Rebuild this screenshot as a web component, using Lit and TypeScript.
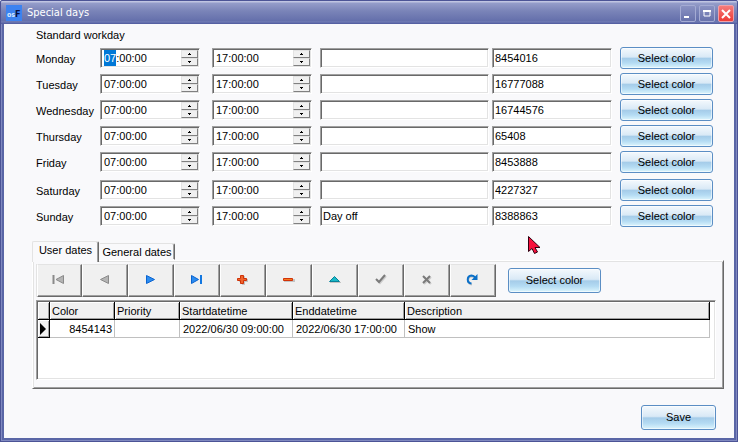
import { LitElement, html, css, svg } from "lit";
import { customElement, state } from "lit/decorators.js";
import { classMap } from "lit/directives/class-map.js";

interface Day { name: string; note: string; color: string; weekend?: boolean; }

const DAYS: Day[] = [
  { name: "Monday", note: "", color: "8454016" },
  { name: "Tuesday", note: "", color: "16777088" },
  { name: "Wednesday", note: "", color: "16744576" },
  { name: "Thursday", note: "", color: "65408" },
  { name: "Friday", note: "", color: "8453888" },
  { name: "Saturday", note: "", color: "4227327", weekend: true },
  { name: "Sunday", note: "Day off", color: "8388863" },
];

const TABS = ["User dates", "General dates"];

const NAV = [
  { label: "First", icon: svg`<path d="M3.5 4v9" stroke="#8a8a8a" stroke-width="2" fill="none"/><path d="M13.5 4.5v8L6 8.5z" fill="#b4b4b4" stroke="#8a8a8a"/>` },
  { label: "Previous", icon: svg`<path d="M12.5 4.5v8l-8-4z" fill="#b4b4b4" stroke="#8a8a8a"/>` },
  { label: "Next", icon: svg`<path d="M4.5 4.5v8l8-4z" fill="#2b8cf0" stroke="#0a63d0"/>` },
  { label: "Last", icon: svg`<path d="M3.5 4.5v8l7-4z" fill="#2b8cf0" stroke="#0a63d0"/><path d="M13 4v9" stroke="#1277e0" stroke-width="2" fill="none"/>` },
  { label: "Insert", icon: svg`<path d="M8 5h3v3h3v3h-3v3H8v-3H5V8h3z" fill="#c4c4c4"/><path d="M6.5 4.5h3v3h3v2h-3v3h-3v-3h-3v-2h3z" fill="#f0642c" stroke="#cf3208"/>` },
  { label: "Delete", icon: svg`<path d="M4 8h11v3H4z" fill="#c4c4c4"/><path d="M3.500 7.500h9v2h-9z" fill="#f47a20" stroke="#d23208"/>` },
  { label: "Edit", icon: svg`<path d="M4 11h11v1H4z" fill="#c4c4c4"/><path d="M3.5 10.5h10l-5-5z" fill="#19b8c6" stroke="#08829a"/>` },
  { label: "Post", icon: svg`<path d="M5 9l3 3 6-7" fill="none" stroke="#cccccc" stroke-width="2"/><path d="M4 8l3 3 6-7" fill="none" stroke="#7b7b7b" stroke-width="2"/>` },
  { label: "Cancel", icon: svg`<path d="M6 6l7 7M13 6l-7 7" stroke="#cccccc" stroke-width="2"/><path d="M5 5l7 7M12 5l-7 7" stroke="#7b7b7b" stroke-width="2"/>` },
  { label: "Refresh", icon: svg`<path d="M8 13.5C3 13 3 6 8 5.5c2 0 3 1 4 3" fill="none" stroke="#c8c8c8" stroke-width="2"/><path d="M7.5 12.5C2.5 12 2.5 5 7.5 4.5c2 0 3 1 4 2.5" fill="none" stroke="#0b70c8" stroke-width="2"/><path d="M13.5 3v6h-6z" fill="#0b70c8"/>` },
];

const ROWS = [
  { color: "8454143", priority: "", start: "2022/06/30 09:00:00", end: "2022/06/30 17:00:00", description: "Show" },
];

@customElement("time-field")
class TimeField extends LitElement {
  static properties = { value: {}, label: {}, active: { type: Boolean } };
  declare value: string;
  declare label: string;
  declare active: boolean;

  static styles = css`
    :host { display: block; height: 20px; min-width: 0; }
    .field {
      display: flex; height: 100%; box-sizing: border-box; padding: 1px;
      background: #fff; border: 1px solid; border-color: #a0a0a0 #fff #fff #a0a0a0;
      box-shadow: inset 1px 1px #696969, inset -1px -1px #e3e3e3;
    }
    input {
      flex: 1; min-width: 0; border: 0; outline: 0; padding: 0 0 0 2px;
      background: transparent; font: 11px/16px "Liberation Sans", sans-serif; color: #000;
    }
    input::selection { background: #0078d7; color: #fff; }
    .spin { width: 17px; display: flex; flex-direction: column; }
    button {
      flex: 1; min-height: 0; padding: 0; display: grid; place-items: center;
      background: #f0f0f0; border: 1px solid; border-color: #e3e3e3 #808080 #808080 #e3e3e3;
    }
    svg { width: 3px; height: 2px; display: block; }
  `;

  firstUpdated() {
    if (!this.active) return;
    const input = this.renderRoot.querySelector("input")!;
    input.focus();
    input.setSelectionRange(0, 2);
  }

  render() {
    return html`<div class="field">
      <input type="text" aria-label=${this.label} .value=${this.value} />
      <div class="spin">
        <button type="button" tabindex="-1" aria-label="Increase"><svg viewBox="0 0 3 2" shape-rendering="crispEdges"><path d="M1 0h1v1h1v1H0V1h1z" /></svg></button>
        <button type="button" tabindex="-1" aria-label="Decrease"><svg viewBox="0 0 3 2" shape-rendering="crispEdges"><path d="M0 0h3v1H2v1H1V1H0z" /></svg></button>
      </div>
    </div>`;
  }
}

@customElement("app-root")
class AppRoot extends LitElement {
  @state() private tab = 0;

  static styles = css`
    :host { display: block; font: 11px/14px "Liberation Sans", sans-serif; color: #000; }
    * { box-sizing: border-box; }
    button, input { font: inherit; color: inherit; }
    .window {
      min-height: 100vh; display: flex; flex-direction: column; padding: 0 4px 4px;
      background: #6672ae; border-radius: 3px 3px 0 0;
      box-shadow: inset 0 0 0 1px #4c5496, inset 0 0 0 2px #8089c0, inset 0 0 0 4px #5a66a6;
    }
    .title {
      height: 24px; margin: 0 -3px; padding: 2px 3px 0 5px; display: flex; align-items: center; gap: 5px;
      background: linear-gradient(#4c5496 0 1px, #c0c5e2 1px 2px, #959dca 3px, #7a84b8 11px, #646fab 21px, #7580b8 22px, #5560a2 23px);
      border-radius: 3px 3px 0 0;
    }
    .logo { width: 16px; height: 16px; display: block; }
    .logo text { font: bold 9px "DejaVu Sans Condensed", "Liberation Sans", sans-serif; }
    .logo .small { font-size: 7px; }
    h1 {
      flex: 1; margin: 0; color: #fff; font: 11px/16px "DejaVu Sans Condensed", "DejaVu Sans", sans-serif;
    }
    .controls { display: flex; gap: 3px; }
    .controls button {
      width: 16px; height: 17px; padding: 0; display: grid; place-items: center;
      border: 1px solid #a4abd3; border-radius: 2px; background: linear-gradient(#8a92c2, #6872ac);
    }
    .controls .close { background: linear-gradient(#f47c7c, #ee3b36); border-color: #f0a0a8; }
    .controls svg { width: 14px; height: 15px; display: block; }
    .body { flex: 1; display: flex; flex-direction: column; padding: 4px 10px 8px 28px; background: #f9f9fb; }
    h2 { margin: 0 0 5px 4px; font: inherit; }
    .days { display: flex; flex-direction: column; gap: 4px; padding: 0 11px 0 4px; }
    .day { display: grid; grid-template-columns: 56px 100px 100px minmax(0, 1fr) 120px 93px; align-items: center; column-gap: 8px; }
    .day.weekend { margin-top: 2px; }
    .name { padding-top: 2px; }
    .until { margin-left: 4px; margin-right: -4px; }
    .note { margin-left: 4px; margin-right: -5px; }
    .text {
      min-width: 0; height: 20px; padding: 0 2px 1px; background: #fff; outline: 0;
      border: 1px solid; border-color: #a0a0a0 #fff #fff #a0a0a0;
      box-shadow: inset 1px 1px #696969, inset -1px -1px #e3e3e3;
    }
    .push {
      height: 22px; padding: 0; border: 1px solid #5b8ec4; border-radius: 3px;
      background: linear-gradient(#f4f9fd 0, #d9e9f6 45%, #a5cce9 52%, #b4dbf3 75%, #dcf5fd 100%);
      box-shadow: inset 0 0 0 1px #ffffff90;
    }
    .push.tall { height: 25px; width: 93px; padding-bottom: 2px; }
    .push.save { width: 75px; align-self: flex-end; margin: 16px 8px 0 0; }
    .tabs { display: flex; align-items: flex-end; height: 19px; margin-top: 14px; }
    .tabs button {
      height: 17px; width: 76px; padding: 0; background: #f9f9fb; border: 1px solid;
      border-color: #e3e3e3 #696969 transparent transparent; border-radius: 2px 2px 0 0;
      box-shadow: inset -1px 0 #a0a0a0; white-space: nowrap; position: relative;
    }
    .tabs .active {
      height: 21px; width: 67px; margin-bottom: -2px; padding-bottom: 4px; z-index: 1;
      border-left-color: #e3e3e3; border-bottom: 0;
    }
    .panel {
      flex: 1; display: flex; flex-direction: column; gap: 3px; padding: 3px 7px 8px 3px;
      border: 1px solid; border-color: #fff #696969 #696969 #fff;
      box-shadow: inset 1px 1px #e3e3e3, inset -1px -1px #a0a0a0;
    }
    .bar { display: flex; align-items: center; gap: 12px; }
    .nav { display: flex; border-left: 1px solid #e3e3e3; }
    .nav button {
      width: 46px; height: 33px; padding: 0 2px 2px 0; display: grid; place-items: center; background: #f0f0f0;
      border: 1px solid; border-color: #e3e3e3 #696969 #696969 #fff; box-shadow: inset -1px -1px #a0a0a0;
    }
    .nav button:first-child { width: 45px; }
    .nav svg { width: 17px; height: 17px; display: block; }
    .grid {
      flex: 1; min-height: 80px; padding: 1px 5px 1px 1px; background: #fff;
      border: 1px solid; border-color: #a0a0a0 #fff #fff #a0a0a0;
      box-shadow: inset 1px 1px #696969, inset -1px -1px #e3e3e3;
    }
    table { width: 100%; table-layout: fixed; border-collapse: separate; border-spacing: 0; }
    th, td { height: 18px; padding: 0 2px; line-height: 16px; text-align: left; font-weight: normal; white-space: nowrap; overflow: hidden; }
    th { background: #f0f0f0; border-right: 1px solid #000; border-bottom: 1px solid #000; box-shadow: inset 1px 1px #fff, inset -1px -1px #a0a0a0; }
    td { border-right: 1px solid #c0c0c0; border-bottom: 1px solid #c0c0c0; padding: 0 3px; }
    td.number { text-align: right; padding: 0 2px; }
    td.mark { padding: 0 2px; background: #f0f0f0; border-color: #000; box-shadow: inset 1px 1px #fff, inset -1px -1px #a0a0a0; }
    td.mark svg { width: 6px; height: 12px; display: block; }
    .c-mark { width: 12px; }
    .c-short { width: 65px; }
    .c-date { width: 113px; }
    .c-end { width: 112px; }
    .cursor { position: absolute; left: 527px; top: 235px; width: 14px; height: 20px; pointer-events: none; z-index: 2; }
  `;

  render() {
    return html`
      <div class="window">
        <header class="title">
          <svg class="logo" viewBox="0 0 16 16" aria-hidden="true">
            <rect width="16" height="16" fill="#3c82f0" />
            <text x="1" y="12" fill="#d5e8ff"><tspan class="small">os</tspan><tspan fill="#08103c">F</tspan></text>
          </svg>
          <h1>Special days</h1>
          <div class="controls">
            <button type="button" aria-label="Minimize"><svg viewBox="0 0 14 15"><path d="M3 10h5v2H3z" fill="#fff" /></svg></button>
            <button type="button" aria-label="Maximize"><svg viewBox="0 0 14 15"><path d="M4 5h6v5H4z" fill="none" stroke="#fff" /><path d="M3 4h8v2H3z" fill="#fff" /></svg></button>
            <button type="button" class="close" aria-label="Close"><svg viewBox="0 0 14 15"><path d="M3 4l8 8M11 4l-8 8" stroke="#fff" stroke-width="2" /></svg></button>
          </div>
        </header>
        <main class="body">
          <h2>Standard workday</h2>
          <div class="days">
            ${DAYS.map((d, i) => html`
              <div class=${classMap({ day: true, weekend: !!d.weekend })}>
                <label class="name" for="note-${i}">${d.name}</label>
                <time-field value="07:00:00" label="${d.name} start" ?active=${i === 0}></time-field>
                <time-field class="until" value="17:00:00" label="${d.name} end"></time-field>
                <input class="text note" id="note-${i}" type="text" .value=${d.note} />
                <input class="text" type="text" aria-label="${d.name} color" .value=${d.color} />
                <button class="push" type="button">Select color</button>
              </div>`)}
          </div>
          <div class="tabs" role="tablist">
            ${TABS.map((t, i) => html`
              <button type="button" role="tab" aria-selected=${i === this.tab} class=${classMap({ active: i === this.tab })}
                @click=${() => (this.tab = i)}>${t}</button>`)}
          </div>
          <section class="panel" role="tabpanel">
            <div class="bar">
              <div class="nav">
                ${NAV.map((n) => html`<button type="button" aria-label=${n.label}><svg viewBox="0 0 17 17">${n.icon}</svg></button>`)}
              </div>
              <button class="push tall" type="button">Select color</button>
            </div>
            <div class="grid">
              <table>
                <colgroup>
                  <col class="c-mark" /><col class="c-short" /><col class="c-short" /><col class="c-date" /><col class="c-end" /><col />
                </colgroup>
                <thead>
                  <tr><th></th><th>Color</th><th>Priority</th><th>Startdatetime</th><th>Enddatetime</th><th>Description</th></tr>
                </thead>
                <tbody>
                  ${ROWS.map((r) => html`<tr>
                    <td class="mark"><svg viewBox="0 0 6 12"><path d="M0 0l6 6-6 6z" /></svg></td>
                    <td class="number">${r.color}</td><td>${r.priority}</td><td>${r.start}</td><td>${r.end}</td><td>${r.description}</td>
                  </tr>`)}
                </tbody>
              </table>
            </div>
          </section>
          <button class="push tall save" type="button">Save</button>
        </main>
      </div>
      <svg class="cursor" viewBox="0 0 14 20" aria-hidden="true">
        <path d="M1.5 1.5v15l3.5-3 2.5 5 3-1.500-2.5-4.500h5z" fill="#f8103c" stroke="#300010" />
      </svg>`;
  }
}
